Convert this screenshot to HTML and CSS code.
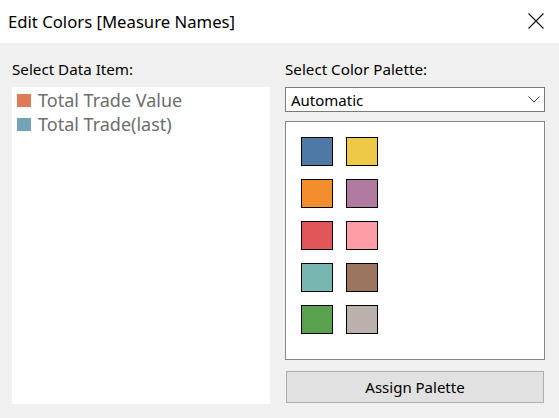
FILE: index.html
```html
<!DOCTYPE html>
<html>
<head>
<meta charset="utf-8">
<link rel="stylesheet" href="styles.css">
</head>
<body>
<div class="dialog">
  <div class="titlebar">
    <span class="title">Edit Colors [Measure Names]</span>
    <svg class="close" width="16" height="16" viewBox="0 0 16 16"><path d="M0.5 0.5 L15.5 15.5 M15.5 0.5 L0.5 15.5" stroke="#111" stroke-width="1.1" fill="none"/></svg>
  </div>
  <div class="content">
    <div class="col">
      <div class="label">Select Data Item:</div>
      <div class="listbox">
        <div class="item"><span class="chip chip-orange"></span>Total Trade Value</div>
        <div class="item"><span class="chip chip-blue"></span>Total Trade(last)</div>
      </div>
    </div>
    <div class="col">
      <div class="label">Select Color Palette:</div>
      <div class="select">
        <span>Automatic</span>
        <svg class="chev" width="12" height="7" viewBox="0 0 12 7"><path d="M0.5 0.5 L6 6 L11.5 0.5" stroke="#444" stroke-width="1" fill="none"/></svg>
      </div>
      <div class="palette">
        <div class="sw c1"></div><div class="sw c2"></div>
        <div class="sw c3"></div><div class="sw c4"></div>
        <div class="sw c5"></div><div class="sw c6"></div>
        <div class="sw c7"></div><div class="sw c8"></div>
        <div class="sw c9"></div><div class="sw c10"></div>
      </div>
      <div class="button">Assign Palette</div>
    </div>
  </div>
</div>
</body>
</html>
```

FILE: styles.css
```css
* { box-sizing: border-box; }
html, body { margin: 0; padding: 0; }
body {
  width: 559px;
  height: 418px;
  overflow: hidden;
  font-family: "Noto Sans", "Open Sans", sans-serif;
  color: #000;
  background: #f0f0f0;
}
.dialog { width: 559px; height: 418px; display: flex; flex-direction: column; }
.titlebar {
  height: 43px;
  background: #fff;
  display: flex;
  align-items: center;
  justify-content: space-between;
  padding: 0 15px 1px 8px;
}
.title { font-size: 16.7px; }
.close { margin-top: 0; }
.content {
  flex: 1;
  display: grid;
  grid-template-columns: 258px 260px;
  column-gap: 15px;
  padding: 0 14px 14px 12px;
}
.col { display: flex; flex-direction: column; }
.label {
  height: 44px;
  padding-top: 16px;
  font-size: 15.2px;
  line-height: 20px;
}
.listbox {
  flex: 1;
  background: #fff;
  padding: 1px 0 0 5px;
}
.item {
  height: 24px;
  display: flex;
  align-items: center;
  font-size: 18px;
  color: #6d6d6d;
}
.chip { width: 14px; height: 13px; margin-right: 7px; flex: none; }
.chip-orange { background: #e07b57; }
.chip-blue { background: #72a3b7; }
.select {
  height: 25px;
  background: #fff;
  border: 1px solid #7a7a7a;
  display: flex;
  align-items: center;
  justify-content: space-between;
  padding: 0 4px 0 5px;
  font-size: 15px;
}
.chev { margin-right: 0; }
.palette {
  margin-top: 9px;
  height: 239px;
  background: #fff;
  border: 1px solid #86868e;
  display: grid;
  grid-template-columns: repeat(2, 32px);
  grid-auto-rows: 29px;
  column-gap: 13px;
  row-gap: 13px;
  padding: 15px 15px;
  align-content: start;
}
.sw { border: 1px solid #000; }
.c1 { background: #4e79a7; }
.c2 { background: #edc948; }
.c3 { background: #f28e2b; }
.c4 { background: #b07aa1; }
.c5 { background: #e15759; }
.c6 { background: #ff9da7; }
.c7 { background: #76b7b2; }
.c8 { background: #9c755f; }
.c9 { background: #59a14f; }
.c10 { background: #bab0ac; }
.button {
  margin: 11px 1px 0 1px;
  height: 32px;
  background: #e1e1e1;
  border: 1px solid #adadad;
  display: flex;
  align-items: center;
  justify-content: center;
  font-size: 15px;
}
```
